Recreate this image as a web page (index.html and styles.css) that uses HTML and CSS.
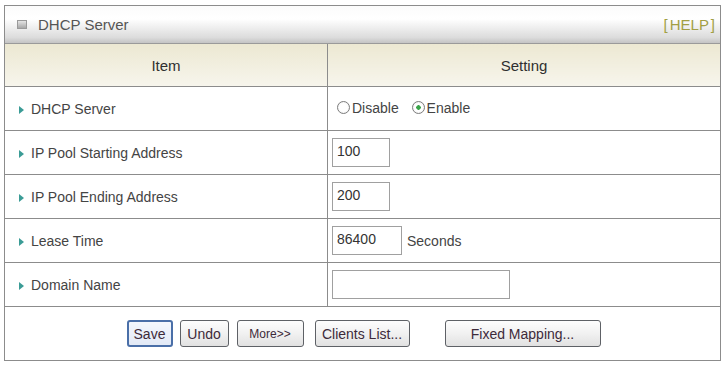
FILE: index.html
```
<!DOCTYPE html>
<html lang="en">
<head>
    <meta charset="UTF-8">
    <title>DHCP Server</title>
    <link rel="stylesheet" href="styles.css">
</head>
<body>
    <div class="panel">
        <div class="panel-head">
            <span class="head-icon"></span>
            <span class="head-title">DHCP Server</span>
            <a class="help" href="#">[ HELP ]</a>
        </div>
        <table class="grid">
            <tr class="cols">
                <th class="col-item">Item</th>
                <th>Setting</th>
            </tr>
            <tr>
                <td class="label">DHCP Server</td>
                <td class="value">
                    <label class="radio"><input type="radio" name="dhcp">Disable</label>
                    <label class="radio"><input type="radio" name="dhcp" checked>Enable</label>
                </td>
            </tr>
            <tr>
                <td class="label">IP Pool Starting Address</td>
                <td class="value"><input type="text" class="box short" value="100"></td>
            </tr>
            <tr>
                <td class="label">IP Pool Ending Address</td>
                <td class="value"><input type="text" class="box short" value="200"></td>
            </tr>
            <tr>
                <td class="label">Lease Time</td>
                <td class="value"><input type="text" class="box mid" value="86400"><span class="unit">Seconds</span></td>
            </tr>
            <tr>
                <td class="label">Domain Name</td>
                <td class="value"><input type="text" class="box long" value=""></td>
            </tr>
            <tr class="actions">
                <td colspan="2">
                    <div class="btns">
                        <button class="btn save">Save</button>
                        <button class="btn undo">Undo</button>
                        <button class="btn more">More&gt;&gt;</button>
                        <button class="btn clients">Clients List...</button>
                        <button class="btn fixed">Fixed Mapping...</button>
                    </div>
                </td>
            </tr>
        </table>
    </div>
</body>
</html>
```
FILE: styles.css
```
body {
    margin: 0;
    padding: 5px 5px 0 4px;
    background: #fff;
    font-family: "Liberation Sans", Arial, sans-serif;
    color: #444;
}

.panel {
    width: 717px;
    border: 1px solid #8c8c8c;
    box-sizing: border-box;
}

.panel-head {
    height: 37px;
    display: flex;
    align-items: center;
    padding: 0 5px 0 12px;
    background: linear-gradient(#fbfbfb 0%, #ffffff 35%, #dcdcdc 85%, #c4c4c4 100%);
    border-bottom: 1px solid #9a9a9a;
    font-size: 15px;
}

.head-icon {
    width: 8px;
    height: 7px;
    margin-right: 11px;
    border: 1px solid #9a9a9a;
    background: linear-gradient(#e4e4e4, #a8a8a8);
}

.head-title {
    color: #555;
    flex: 1;
}

.help {
    color: #a29f44;
    text-decoration: none;
    word-spacing: -2px;
}

.grid {
    width: 100%;
    border-collapse: collapse;
    font-size: 14px;
}

.grid td,
.grid th {
    border-top: 1px solid #8c8c8c;
    padding: 0;
}

.cols th {
    height: 42px;
    border-top: none;
    font-weight: normal;
    font-size: 15px;
    color: #2f2f2f;
    background: linear-gradient(#ece8d2, #f7f5ec);
}

.col-item {
    width: 322px;
    border-right: 1px solid #8c8c8c;
}

.grid tr td {
    height: 43px;
}

.label {
    border-right: 1px solid #8c8c8c;
    padding-left: 14px !important;
    color: #444;
}

.label::before {
    content: "";
    display: inline-block;
    border-left: 5px solid #3b9c96;
    border-top: 4px solid transparent;
    border-bottom: 4px solid transparent;
    margin-right: 7px;
    vertical-align: 0;
}

.value {
    padding-left: 4px !important;
}

.radio {
    display: inline-flex;
    align-items: center;
    margin-left: 5px;
    margin-right: 4px;
    color: #444;
}

.radio input {
    appearance: none;
    -webkit-appearance: none;
    width: 13px;
    height: 13px;
    margin: 0 2px 0 0;
    border: 1px solid #7d7d7d;
    border-radius: 50%;
    background: radial-gradient(circle, #ffffff 50%, #e2e2e2);
    box-sizing: border-box;
}

.radio input:checked {
    background: radial-gradient(circle, #3aa44a 0, #3aa44a 2px, #ffffff 2.5px, #ffffff 50%, #e2e2e2);
}

.box {
    height: 29px;
    box-sizing: border-box;
    border: 1px solid #a0a0a0;
    padding: 0 0 4px 4px;
    font-family: inherit;
    font-size: 14px;
    color: #333;
    vertical-align: middle;
}

.short { width: 58px; }
.mid { width: 70px; }
.long { width: 178px; }

.unit {
    margin-left: 5px;
    vertical-align: middle;
}

.actions td {
    height: 53px !important;
}

.btns {
    display: flex;
    justify-content: center;
    padding-left: 2px;
}

.btn {
    height: 27px;
    padding: 0;
    border: 1px solid #5e6166;
    border-radius: 3px;
    background: linear-gradient(#fdfdfd, #f1f1f1 50%, #e1e1e1);
    font-family: inherit;
    font-size: 14px;
    color: #3d2a3a;
}

.save {
    width: 46px;
    border: 2px solid #4a6fa8;
    background: linear-gradient(#f4f7fd, #e2e9f6);
}

.undo { width: 49px; margin-left: 7px; }
.more { width: 67px; margin-left: 8px; font-size: 12px; }
.clients { width: 95px; margin-left: 11px; }
.fixed { width: 156px; margin-left: 35px; }
```
